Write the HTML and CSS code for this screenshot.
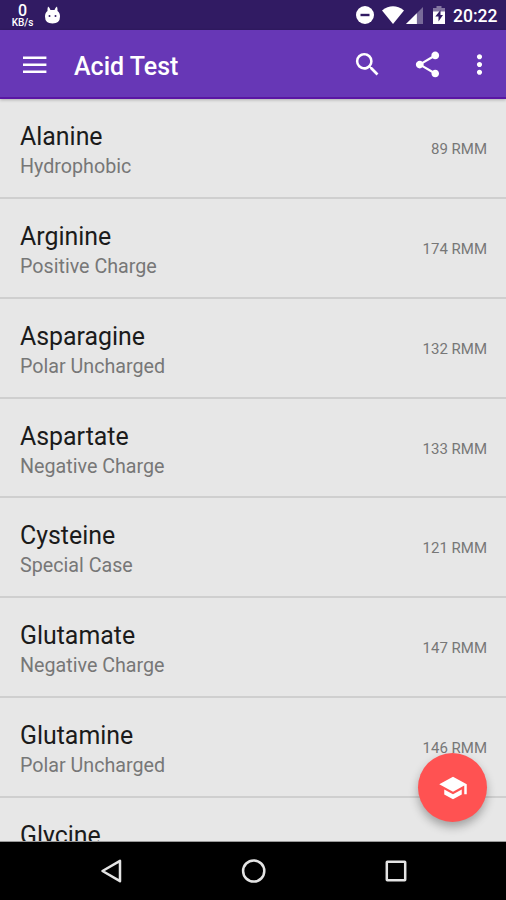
FILE: index.html
```html
<!DOCTYPE html>
<html lang="en">
<head>
<meta charset="utf-8">
<title>Acid Test</title>
<link rel="stylesheet" href="styles.css">
</head>
<body>
<div class="screen">
  <div class="status">
    <div class="speed"><span class="speed-value">0</span><span class="speed-unit">KB/s</span></div>
    <svg class="droid" width="17" height="20" viewBox="0 0 17 20"><path d="M4 1.5q1.5.5 2.500 3.500h4q1-3 2.500-3.500.7 2.500.5 4.500 2.500 1.500 2.500 5.500 0 7-7.500 7t-7.500-7q0-4 2.500-5.500-.2-2 .5-4.500z" fill="#fff"/><circle cx="5.500" cy="11" r="1" fill="#311b63"/><circle cx="11.500" cy="11" r="1" fill="#311b63"/></svg>
    <span class="spacer"></span>
    <svg class="dnd" width="18" height="18" viewBox="0 0 18 18"><circle cx="9" cy="9" r="9" fill="#fff"/><path d="M4.500 7.800h9v2.400h-9z" fill="#311b63"/></svg>
    <svg class="wifi" width="22" height="18" viewBox="0 0 22 18"><path d="M0 4.400Q11-4 22 4.400L11 18z" fill="#fff"/></svg>
    <svg class="signal" width="17" height="17" viewBox="0 0 18 18"><path d="M18 0v18H0z" fill="#fff" opacity=".35"/><path d="M11.500 6.500v11.500H0z" fill="#fff"/></svg>
    <svg class="battery" width="12" height="18" viewBox="0 0 12 18"><path d="M0 2h3.500V0h5v2H12v4H0z" fill="#fff" opacity=".4"/><path d="M0 5.500h12V18H0z" fill="#fff"/><path d="M7.500 4L2.300 10.500H5.500v5L10 9H7.500z" fill="#311b63"/></svg>
    <span class="clock">20:22</span>
  </div>
  <header class="bar">
    <svg class="menu" width="24" height="18" viewBox="0 0 24 18"><path d="M0 .4h23.400v2.500H0zM0 7.500h23.400v2.500H0zM0 14.600h23.400v2.500H0z" fill="#fff"/></svg>
    <h1 class="title">Acid Test</h1>
    <svg class="search" width="31" height="31" viewBox="0 0 24 24" fill="#fff"><path d="M15.5 14h-.79l-.28-.27A6.471 6.471 0 0 0 16 9.5 6.5 6.5 0 1 0 9.5 16c1.61 0 3.09-.59 4.23-1.57l.27.28v.79l5 4.99L20.49 19l-4.99-5zm-6 0C7.01 14 5 11.99 5 9.5S7.01 5 9.5 5 14 7.01 14 9.5 11.99 14 9.5 14z"/></svg>
    <svg class="share" width="31" height="31" viewBox="0 0 24 24" fill="#fff"><path d="M18 16.08c-.76 0-1.44.3-1.96.77L8.91 12.7c.05-.23.09-.46.09-.7s-.04-.47-.09-.7l7.05-4.11c.54.5 1.25.81 2.04.81 1.66 0 3-1.34 3-3s-1.34-3-3-3-3 1.34-3 3c0 .24.04.47.09.7L8.04 9.81C7.5 9.31 6.79 9 6 9c-1.66 0-3 1.34-3 3s1.34 3 3 3c.79 0 1.500-.31 2.04-.81l7.12 4.16c-.05.21-.08.43-.08.65 0 1.61 1.31 2.92 2.92 2.92s2.92-1.31 2.92-2.92-1.31-2.92-2.92-2.92z"/></svg>
    <svg class="more" width="31" height="31" viewBox="0 0 24 24" fill="#fff"><path d="M12 8c1.1 0 2-.9 2-2s-.9-2-2-2-2 .9-2 2 .9 2 2 2zm0 2c-1.1 0-2 .9-2 2s.9 2 2 2 2-.9 2-2-.9-2-2-2zm0 6c-1.1 0-2 .9-2 2s.9 2 2 2 2-.9 2-2-.9-2-2-2z"/></svg>
  </header>
  <main class="list">
    <div class="row"><div><div class="name">Alanine</div><div class="kind">Hydrophobic</div></div><span class="mass">89 RMM</span></div>
    <div class="row"><div><div class="name">Arginine</div><div class="kind">Positive Charge</div></div><span class="mass">174 RMM</span></div>
    <div class="row"><div><div class="name">Asparagine</div><div class="kind">Polar Uncharged</div></div><span class="mass">132 RMM</span></div>
    <div class="row"><div><div class="name">Aspartate</div><div class="kind">Negative Charge</div></div><span class="mass">133 RMM</span></div>
    <div class="row"><div><div class="name">Cysteine</div><div class="kind">Special Case</div></div><span class="mass">121 RMM</span></div>
    <div class="row"><div><div class="name">Glutamate</div><div class="kind">Negative Charge</div></div><span class="mass">147 RMM</span></div>
    <div class="row"><div><div class="name">Glutamine</div><div class="kind">Polar Uncharged</div></div><span class="mass">146 RMM</span></div>
    <div class="row"><div><div class="name">Glycine</div></div></div>
  </main>
  <button class="fab" aria-label="Quiz"><svg width="30" height="30" viewBox="0 0 24 24" fill="#fff"><path d="M5 13.18v4L12 21l7-3.82v-4L12 17l-7-3.82zM12 3L1 9l11 6 9-4.91V17h2V9L12 3z"/></svg></button>
  <nav class="nav">
    <svg width="24" height="26" viewBox="0 0 24 26"><path d="M3.500 13L21 2.800v20.400z"/></svg>
    <svg width="26" height="26" viewBox="0 0 26 26"><circle cx="12.700" cy="13" r="10.600"/></svg>
    <svg width="24" height="24" viewBox="0 0 24 24"><rect x="2.800" y="2.800" width="18.400" height="18.400" rx=".5"/></svg>
  </nav>
</div>
</body>
</html>
```
FILE: styles.css
```css
* { box-sizing: border-box; }
body { margin: 0; font-family: Roboto, "Liberation Sans", sans-serif; }
svg { display: block; flex: none; }
.screen {
  position: relative;
  width: 506px;
  height: 900px;
  display: flex;
  flex-direction: column;
  overflow: hidden;
  background: #e7e7e7;
}
.status {
  flex: none;
  height: 30px;
  display: flex;
  align-items: center;
  padding: 0 9px 0 11px;
  background: #311b63;
  color: #fff;
}
.speed { width: 23px; padding-top: 1px; display: flex; flex-direction: column; align-items: center; font-weight: 500; }
.speed-value { font-size: 16px; line-height: 14px; }
.speed-unit { font-size: 10px; line-height: 9px; }
.droid { margin-left: 10px; margin-top: -1px; }
.spacer { flex: 1; }
.dnd { margin-right: 8px; }
.wifi { margin-right: 2px; }
.signal { margin-right: 10px; }
.battery { margin-right: 8px; }
.clock { width: 44px; font-size: 17.5px; font-weight: 500; line-height: 30px; white-space: nowrap; padding-top: 2px; }
.bar {
  flex: none;
  position: relative;
  height: 69px;
  display: flex;
  align-items: center;
  padding: 2px 0 0 23px;
  background: #6737b6;
  border-bottom: 2px solid #5a16a4;
  color: #fff;
  box-shadow: 0 1px 3px rgba(0, 0, 0, .25);
}
.title { flex: 1; margin: 4px 0 0 27px; font-size: 25px; font-weight: 500; line-height: 30px; }
.search { margin-right: 29px; }
.share { margin-right: 21px; }
.more { margin-right: 11px; }
.list { flex: 1; min-height: 0; overflow: hidden; border-bottom: 1px solid #999; }
.row {
  height: 99.85px;
  display: flex;
  justify-content: space-between;
  padding: 23px 19px 0 20px;
  border-bottom: 2px solid #cfcfcf;
}
.name { font-size: 24.900px; line-height: 30px; color: #1b1b1b; }
.kind { font-size: 19.700px; line-height: 30px; color: #777; }
.mass { margin-top: 17px; font-size: 15px; line-height: 20px; color: #777; }
.fab {
  position: absolute;
  left: 418px;
  top: 753px;
  width: 69px;
  height: 69px;
  display: flex;
  align-items: center;
  justify-content: center;
  padding: 0;
  border: 0;
  border-radius: 50%;
  background: #ff5252;
  box-shadow: 0 5px 10px rgba(0, 0, 0, .3);
}
.nav {
  flex: none;
  height: 58px;
  display: flex;
  align-items: center;
  justify-content: space-between;
  padding: 0 98px 0 99px;
  background: #000;
  fill: none;
  stroke: #e4e4e4;
  stroke-width: 2.5;
  stroke-linejoin: round;
}
```
